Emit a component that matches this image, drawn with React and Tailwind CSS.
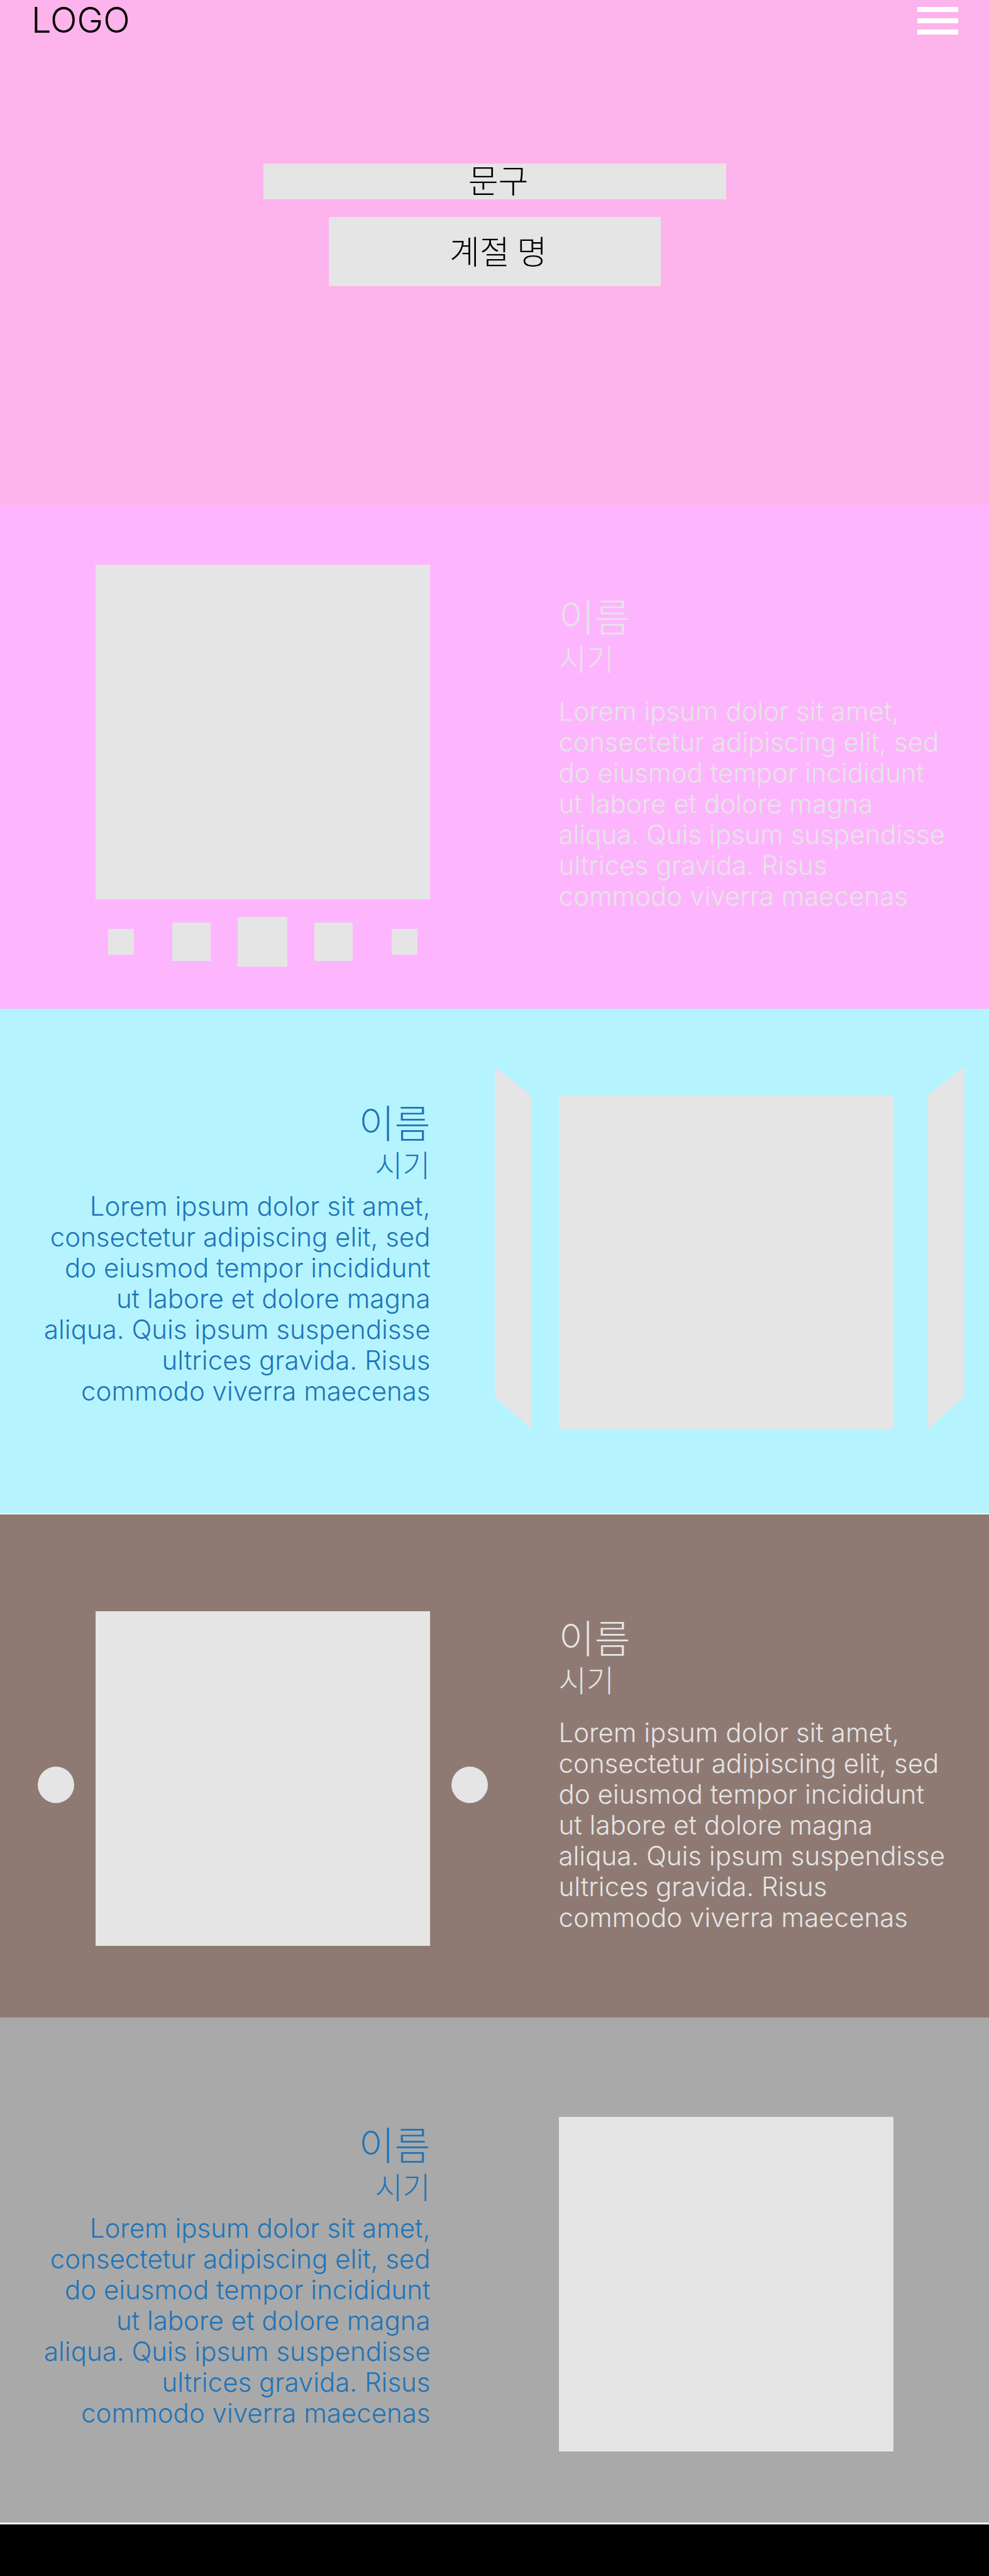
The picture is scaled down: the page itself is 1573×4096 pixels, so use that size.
const KR = "font-['Noto_Sans_CJK_KR',sans-serif]";

function Caption({ className, bodyGap, align = "text-left" }) {
  return (
    <div className={`${align} ${className}`}>
      <h2 className={`${KR} text-[62px] leading-[76px] font-light`}>이름</h2>
      <h3 className={`${KR} text-[48px] leading-[58px] font-light`}>시기</h3>
      <p className={`${bodyGap} text-[42px] leading-[49px] font-light whitespace-nowrap`}>
        Lorem ipsum dolor sit amet,
        <br />
        consectetur adipiscing elit, sed
        <br />
        do eiusmod tempor incididunt
        <br />
        ut labore et dolore magna
        <br />
        aliqua. Quis ipsum suspendisse
        <br />
        ultrices gravida. Risus
        <br />
        commodo viverra maecenas
      </p>
    </div>
  );
}

function Picture() {
  return <div className="aspect-square w-[532px] shrink-0 bg-[#e5e5e5]" />;
}

function Hero() {
  return (
    <section className="bg-[#fdb3eb] pb-[348px]">
      <header className="flex h-[65px] items-center justify-between pr-[49px] pl-[50px]">
        <a href="#top" className="text-[56px] leading-[65px] font-light text-black">
          LOGO
        </a>
        <button type="button" aria-label="메뉴" className="flex w-[65px] flex-col gap-[10px]">
          <span className="h-2 bg-white" />
          <span className="h-2 bg-white" />
          <span className="h-2 bg-white" />
        </button>
      </header>
      <div className={`${KR} flex flex-col items-center gap-7 pt-[195px] font-light text-black`}>
        <p className="flex h-[57px] w-[736px] max-w-full items-center justify-center bg-[#e5e5e5] pb-2 pl-3 text-[52px] leading-[58px]">
          문구
        </p>
        <h1 className="flex h-[110px] w-[528px] max-w-full items-center justify-center bg-[#e5e5e5] pb-1 pl-3 text-[52px] leading-[58px]">
          계절 명
        </h1>
      </div>
    </section>
  );
}

function Thumbnail({ label, className }) {
  return <button type="button" aria-label={label} className={`bg-[#e5e5e5] ${className}`} />;
}

function Spring() {
  return (
    <section className="grid grid-cols-2 bg-[#fdb6fd] pb-[67px] text-[#e5e5e5]">
      <div className="flex justify-end pt-[95px] pr-[103px]">
        <div>
          <Picture />
          <div className="mt-7 flex items-center justify-between px-5">
            <Thumbnail label="1" className="size-[41px]" />
            <div className="flex items-center gap-[43px]">
              <Thumbnail label="2" className="size-[61px]" />
              <Thumbnail label="3" className="size-[79px]" />
              <Thumbnail label="4" className="size-[61px]" />
            </div>
            <Thumbnail label="5" className="size-[41px]" />
          </div>
        </div>
      </div>
      <Caption className="pt-[137px] pl-[102px]" bodyGap="mt-8" />
    </section>
  );
}

function Summer() {
  return (
    <section className="grid grid-cols-2 border-b-2 border-white bg-[#b5f4fe] pb-[133px] text-[#2074b8]">
      <Caption align="text-right" className="pt-[141px] pr-[102px]" bodyGap="mt-[14px]" />
      <div className="flex items-end pt-[92px]">
        <button
          type="button"
          aria-label="이전"
          className="h-[577px] w-[59px] bg-[#e5e5e5] [clip-path:polygon(0_0,100%_8%,100%_100%,0_91%)]"
        />
        <div className="mr-[54px] ml-[43px]">
          <Picture />
        </div>
        <button
          type="button"
          aria-label="다음"
          className="h-[577px] w-[59px] bg-[#e5e5e5] [clip-path:polygon(0_8%,100%_0,100%_91%,0_100%)]"
        />
      </div>
    </section>
  );
}

function Autumn() {
  return (
    <section className="grid grid-cols-2 bg-[#8f7a73] pb-[114px] text-[#e5e5e5]">
      <div className="flex items-center justify-end gap-[34px] pt-[154px] pr-[11px]">
        <button type="button" aria-label="이전" className="mt-5 size-[58px] rounded-full bg-[#e5e5e5]" />
        <Picture />
        <button type="button" aria-label="다음" className="mt-5 size-[58px] rounded-full bg-[#e5e5e5]" />
      </div>
      <Caption className="pt-[156px] pl-[102px]" bodyGap="mt-8" />
    </section>
  );
}

function Winter() {
  return (
    <section className="grid grid-cols-2 border-b-[3px] border-white bg-[#a9a9a9] pb-[113px] text-[#2074b8]">
      <Caption align="text-right" className="pt-[162px] pr-[102px]" bodyGap="mt-[14px]" />
      <div className="pt-[158px] pl-[102px]">
        <Picture />
      </div>
    </section>
  );
}

export default function App() {
  return (
    <main id="top" className="flex min-h-screen flex-col font-[Inter,'Noto_Sans_CJK_KR',sans-serif]">
      <Hero />
      <Spring />
      <Summer />
      <Autumn />
      <Winter />
      <footer className="min-h-20 grow bg-black" />
    </main>
  );
}
